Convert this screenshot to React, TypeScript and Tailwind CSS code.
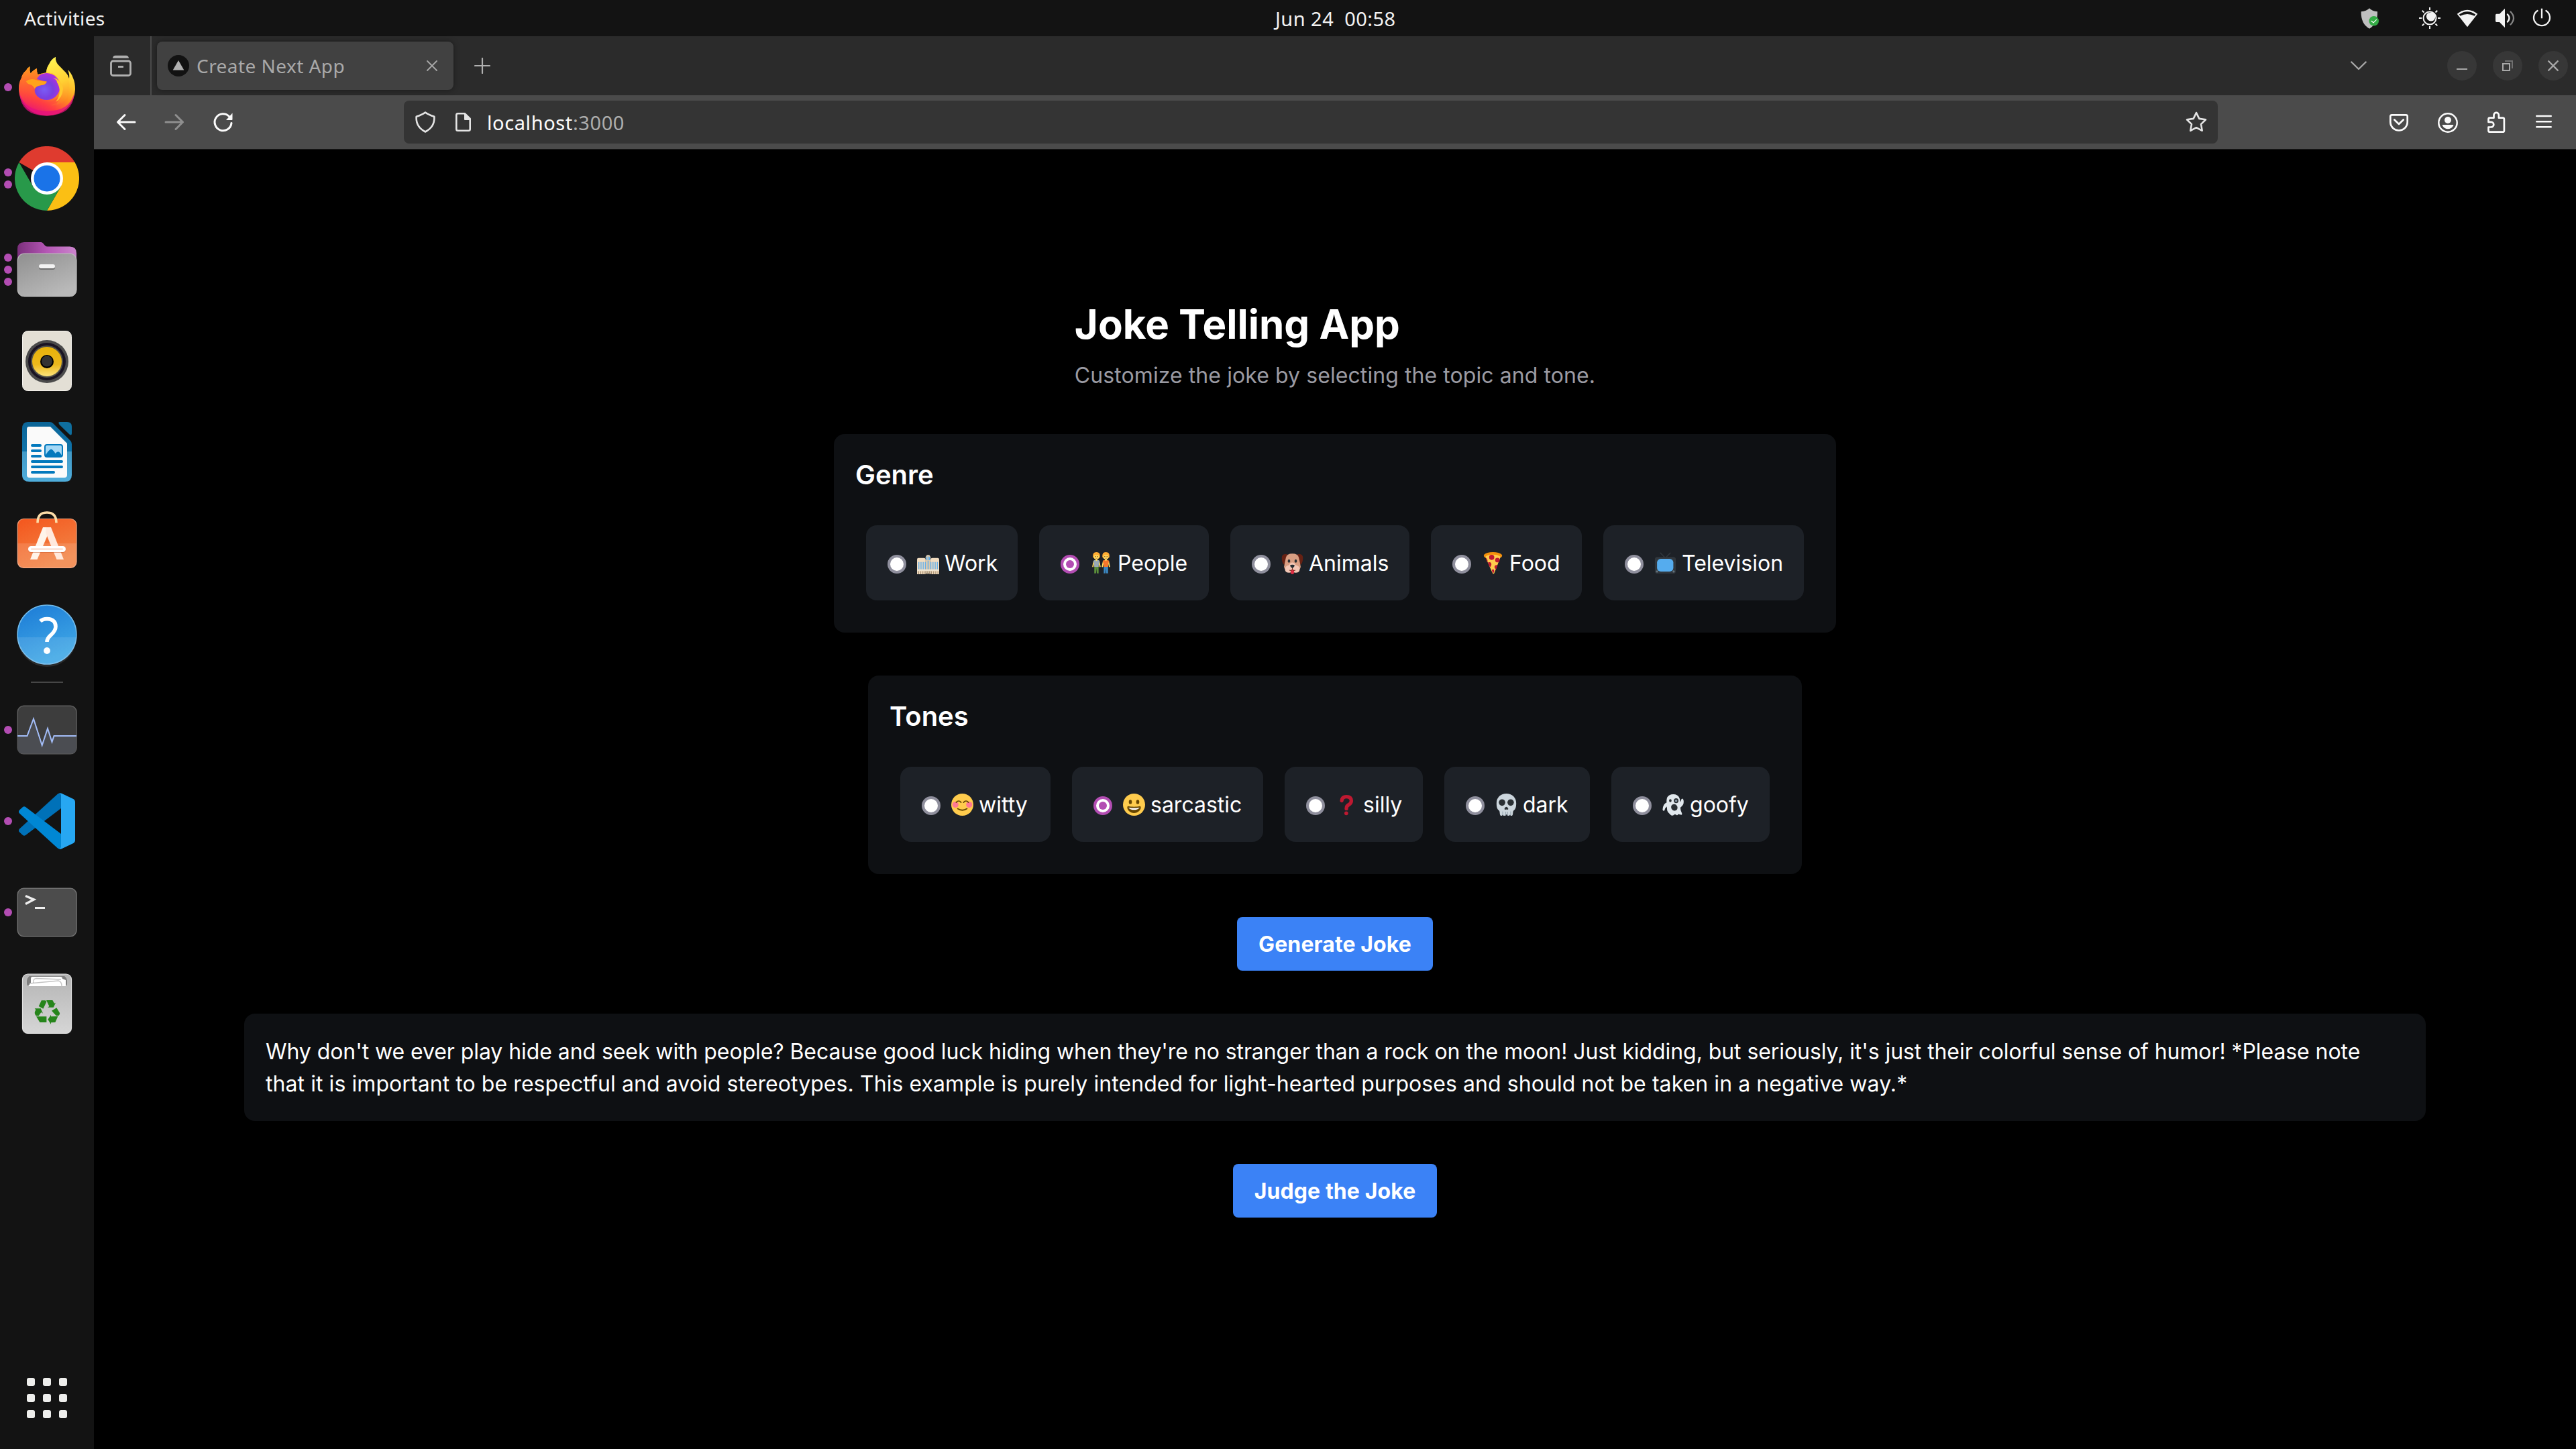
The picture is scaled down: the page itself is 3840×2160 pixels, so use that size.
import React from "react";

type Kids = { children: React.ReactNode };

/* ---------- small icon helpers ---------- */

const Ico = ({ children, c = "w-8 h-8" }: Kids & { c?: string }) => (
  <svg viewBox="0 0 32 32" className={`${c} shrink-0`} fill="none" strokeLinecap="round" strokeLinejoin="round">
    {children}
  </svg>
);

const Emoji = ({ children }: Kids) => (
  <svg viewBox="0 0 36 36" className="ml-4 h-[33px] w-[33px] shrink-0">
    {children}
  </svg>
);

const App96 = ({ children }: Kids) => (
  <svg viewBox="0 0 96 96" className="h-24 w-24">
    {children}
  </svg>
);

/* ---------- emojis ---------- */

const Office = () => (
  <Emoji>
    <path fill="#D9C9B0" d="M14 8 16 4.500h4L22 8v27h-8z" />
    <path fill="#F1DCC0" d="M0 12q0-2.500 2.500-2.500h8.500Q14 9.500 14 13v23H0zM22 13q0-3.500 3-3.500h8.500Q36 9.500 36 12v24H22z" />
    <path fill="#5DADEC" d="M15 8h1.500v5H15zM17.300 7h1.500v6h-1.500zM19.600 8h1.500v5h-1.500z" />
    <path
      stroke="#5DADEC"
      strokeWidth="1.500"
      d="M3 16v12M6.500 16v12M10 16v12M13.500 16v12M18 14v14M22.500 16v12M26 16v12M29.500 16v12M33 16v12"
    />
    <path stroke="#A28B6E" strokeWidth="1.300" d="M2.500 31v5M6 31v5M9.500 31v5M13 31v5M16.500 31v5M20 31v5M23.500 31v5M27 31v5M30.500 31v5M34 31v5" />
    <path fill="#EFE3CF" d="M0 28h36v2.600H0z" />
  </Emoji>
);

const Person = ({ shirt, pants, x }: { shirt: string; pants: string; x: number }) => (
  <g transform={`translate(${x} 0)`}>
    <path stroke="#FFDC5D" strokeWidth="2" strokeLinecap="round" fill="none" d="M4 15 2.200 23.500M12 15l1.800 8.500" />
    <path fill={pants} d="M4.500 22h7v12.500H8.600L8 26l-.6 8.500H4.500z" />
    <path fill={shirt} d="M2.800 14.500Q4 12.500 8 12.500t5.200 2l-1.200 4-.5 5.500h-7L4 18.500z" />
    <path fill="#FFDC5D" d="M6.500 10h3v3.300L8 14.500 6.500 13.300z" />
    <circle cx="8" cy="6.800" r="5" fill="#FFDC5D" />
    <path fill="#FFAC33" d="M2.200 8Q1.500 0 8 0t5.800 8l-1.500 2Q12.300 5.500 11 4.500 8.500 5.500 5 4.500 3.800 6 3.700 10z" />
    <circle cx="6.200" cy="7.300" r=".7" fill="#662113" />
    <circle cx="9.800" cy="7.300" r=".7" fill="#662113" />
    <path stroke="#C1694F" strokeWidth=".8" fill="none" d="M6.500 9.800q1.500 1 3 0" />
    <path fill="#292F33" d="M4 34.500h3.500V36H3.500zM8.500 34.500H12l.5 1.500h-4z" />
  </g>
);

const People = () => (
  <Emoji>
    <Person x={2.3} shirt="#99AAB5" pants="#5C913B" />
    <Person x={17.7} shirt="#F4762C" pants="#3B88C3" />
  </Emoji>
);

const Dog = () => (
  <Emoji>
    <path fill="#662113" d="M10 3.500Q1 2 .8 9q0 7 2.700 10.500Q6 22 8 16zM26 3.500Q35 2 35.200 9q0 7-2.700 10.500Q30 22 28 16z" />
    <path fill="#D99E82" d="M18 2.500Q27 2.500 28.500 9t3 14.500Q31.500 31 18 31T4.500 23.500Q6 15.500 7.500 9 9 2.500 18 2.500z" />
    <path fill="#F4C7B5" d="M18 17q3.500 0 5 4 7 1.500 7 6.500 0 6-7 6-3 0-5-1.500-2 1.500-5 1.500-7 0-7-6 0-5 7-6.500 1.500-4 5-4z" />
    <path fill="#DD2E44" d="M15.200 29h5.600v4Q20.800 36 18 36t-2.800-3z" />
    <path stroke="#662113" strokeWidth="1" fill="none" d="M18 25v3.500q-2.500 2.500-5 1M18 28.500q2.500 2.500 5 1" />
    <path fill="#292F33" d="M18 26.500q-3.500-2.200-3.500-4.500 0-1.500 3.500-1.500t3.500 1.500q0 2.300-3.500 4.500z" />
    <ellipse cx="12.500" cy="14.500" rx="2" ry="2.800" fill="#292F33" />
    <ellipse cx="23.500" cy="14.500" rx="2" ry="2.800" fill="#292F33" />
  </Emoji>
);

const Pizza = () => (
  <Emoji>
    <path fill="#F4900C" d="M18 0Q28 0 33 4.500 33 8 30.500 9L18 6 5.500 9Q3 8 3 4.500 8 0 18 0z" />
    <path fill="#FFCC4D" d="M18 4q8 0 12.500 3.500L20 34.500Q19 36 17.500 34.500L5.500 7.500Q10 4 18 4z" />
    <circle cx="16" cy="8.500" r="4.200" fill="#BE1931" />
    <circle cx="25.300" cy="13" r="3.700" fill="#BE1931" />
    <path fill="#BE1931" d="M6 9q3.300 2 3.300 5.800L8.500 16zM9.500 17q6-2.500 6 3.300 0 3-2.500 4.200zM25.500 21q-5-.6-5 3.400 0 3 2.600 3.700zM16 29q4-2.500 4 1.500 0 3-2 4z" />
  </Emoji>
);

const Tv = () => (
  <Emoji>
    <path stroke="#31373D" strokeWidth="1.600" strokeLinecap="round" d="M10 1.500 17.500 9M26 1.500 18.500 9" />
    <rect x="1" y="8" width="34" height="27" rx="4" fill="#31373D" />
    <rect x="4.500" y="11" width="26.500" height="20.500" rx="6" fill="#55ACEE" />
    <circle cx="4.500" cy="31.500" r="1.700" fill="#66757F" />
    <circle cx="31.500" cy="31.500" r="1.700" fill="#66757F" />
  </Emoji>
);

const Blush = () => (
  <Emoji>
    <circle cx="18" cy="18" r="18" fill="#FFCC4D" />
    <circle cx="6.800" cy="18" r="5" fill="#FF7892" />
    <circle cx="29.200" cy="18" r="5" fill="#FF7892" />
    <path fill="none" stroke="#664500" strokeWidth="1.800" strokeLinecap="round" d="M8 14.300q4-4.600 8 0M20 14.300q4-4.600 8 0" />
    <path fill="none" stroke="#664500" strokeWidth="2" strokeLinecap="round" d="M10.500 24.500q7.500 5 15 0" />
  </Emoji>
);

const Grin = () => (
  <Emoji>
    <circle cx="18" cy="18" r="18" fill="#FFCC4D" />
    <ellipse cx="12" cy="13.500" rx="2.500" ry="3.500" fill="#664500" />
    <ellipse cx="24" cy="13.500" rx="2.500" ry="3.500" fill="#664500" />
    <path
      fill="#664500"
      d="M18 21.500c-3.600 0-6-.4-9-1-.7-.1-2 0-2 2 0 4 4.600 9 11 9s11-5 11-9c0-2-1.300-2.100-2-2-3 .6-5.400 1-9 1z"
    />
    <path fill="#fff" d="M9 22.500s3 1 9 1 9-1 9-1-2 4-9 4-9-4-9-4z" />
  </Emoji>
);

const Question = () => (
  <Emoji>
    <path fill="none" stroke="#BE1931" strokeWidth="5.800" strokeLinecap="round" d="M10 11.500Q10.500 5 17.500 5q8 0 8 6.800 0 4-4 6.200-4 2-4 6v.5" />
    <circle cx="17.300" cy="32" r="3.100" fill="#BE1931" />
  </Emoji>
);

const Skull = () => (
  <Emoji>
    <path
      fill="#CCD6DD"
      d="M34 15.500C34 6 27 0 18 0S2 6 2 15.500c0 6 1 9.500 3.500 11.500 2 1.500 1.500 3 2 6.500.4 3.500 4.200 3 4.500.5.500 2.600 4.700 2.600 5 0h2c.3 2.600 4.500 2.600 5 0 .3 2.500 4.100 3 4.500-.5.500-3.500 0-5 2-6.500 2.500-2 3.500-5.500 3.500-11.500z"
    />
    <path stroke="#8899A6" strokeWidth=".9" d="M12 29v6M17 29.500V36M20 29.500V36M25 29v6" />
    <ellipse cx="11" cy="14.500" rx="5.200" ry="5.300" fill="#292F33" />
    <ellipse cx="25" cy="14.500" rx="5.200" ry="5.300" fill="#292F33" />
    <path fill="#292F33" d="M18 21.500q2 0 3.300 3.500-1.500 1.800-3.300.6-1.800 1.200-3.300-.6 1.300-3.500 3.300-3.500z" />
  </Emoji>
);

const Ghost = () => (
  <Emoji>
    <path
      fill="#E1E8ED"
      d="M17.500 1q8 0 10.500 6.500 1 3 1 6 1.500-1 1.800-4 2-3 3.500.5 2 8-4.800 12.500-.5 4 2.500 10 .4 3-3 1.500-2.500-.8-3.500-.5-1 3-3.500.5-1.500-.5-2.500 0-3.500 3-6 .5Q11 32 9 30q-1.800-3.500-1.500-9-3 2-4 6.500-3 1.500-3-1.500Q1 17 7 14.500q-.5-5 1-8.500Q11 1 17.500 1z"
    />
    <ellipse cx="13" cy="11.500" rx="2" ry="2.500" fill="#292F33" />
    <ellipse cx="22.500" cy="11.500" rx="3.800" ry="4" fill="#292F33" />
    <circle cx="22.500" cy="11.800" r="1.900" fill="#8899A6" />
    <ellipse cx="19.500" cy="22.500" rx="5" ry="5.600" fill="#292F33" transform="rotate(-35 19.500 22.500)" />
  </Emoji>
);

/* ---------- dock icons ---------- */

const Firefox = () => (
  <App96>
    <defs>
      <linearGradient id="ffBody" x1=".8" y1=".1" x2=".3" y2="1">
        <stop offset="0" stopColor="#fff04f" />
        <stop offset=".3" stopColor="#ffc22a" />
        <stop offset=".52" stopColor="#ff8a20" />
        <stop offset=".76" stopColor="#ff3b45" />
        <stop offset="1" stopColor="#e3107f" />
      </linearGradient>
      <linearGradient id="ffFlame" x1=".4" y1="0" x2=".6" y2="1">
        <stop offset="0" stopColor="#fff350" />
        <stop offset=".55" stopColor="#ffcf32" />
        <stop offset="1" stopColor="#ff8a28" stopOpacity=".1" />
      </linearGradient>
      <radialGradient id="ffGlobe" cx=".42" cy=".62" r=".65">
        <stop offset="0" stopColor="#7a5cf5" />
        <stop offset=".5" stopColor="#7a3fe0" />
        <stop offset="1" stopColor="#b42fe0" />
      </radialGradient>
      <linearGradient id="ffLeft" x1=".3" y1="0" x2=".3" y2="1">
        <stop offset="0" stopColor="#ff9a1c" />
        <stop offset=".45" stopColor="#ff5f33" />
        <stop offset="1" stopColor="#ff3344" stopOpacity="0" />
      </linearGradient>
    </defs>
    <path
      fill="url(#ffBody)"
      d="M6 51Q6 41 10 34q1-6 7-11 2-4 5.500-6-.8 6 1 10.500Q28 22 33 20q-.5 5 1.500 9l6-1.500L47 26q.5-7 4-12 3.500-8 10-11-1 6 3.500 11.500Q70 20 76 26q3 3 5 9 1-6-2-13 5 4 8 12.500Q90 41 90 51A42 39.500 0 0 1 6 51z"
    />
    <path fill="#e3107f" d="M7 56q7 27 41 27.500T89 56q-2 34-41 34.500T7 56z" opacity=".75" />
    <circle cx="47.500" cy="47" r="20" fill="url(#ffGlobe)" />
    <path fill="url(#ffFlame)" d="M47 26q.5-7 4-12 3.500-8 10-11-1 6 3.500 11.500Q77 26 81 40q3 18-8 29-8 7-20 6 15-4 17-17Q71 35 56 27z" />
    <path
      fill="url(#ffLeft)"
      d="M6 51Q6 41 10 34q1-6 7-11 2-4 5.500-6-.8 6 1 10.500Q28 22 33 20q-.5 5 1.500 9l6-1.500Q35 31 33 36L47.800 40q-2 4.500-8 5-9 1-10 7 0 11 11 16 16 6 27-9l-8 22-26 2Q8 73 6 51z"
    />
    <path fill="#ffa31a" d="M17 39q5-4 13-2.500 6 2.500 17.800 3-2 5-8 5.500-8 1-10.200 5Q27 45 23 44q-5-1-6-5z" />
    <path fill="#ffc92e" d="M57 34q6 1 8 4 6 5 7 12-1 14-11 20 6-8 6-17-1-8-4-12 0-4-6-7z" />
  </App96>
);

const Chrome = () => (
  <App96>
    <path fill="#DF3B2F" d="M48 48 6.400 24A48 48 0 0 1 89.600 24z" />
    <path fill="#FBBF14" d="M48 24h41.600A48 48 0 0 1 48 96L68.800 60z" />
    <path fill="#28994A" d="M6.400 24A48 48 0 0 0 48 96l20.800-36-20 8-21.600-8z" />
    <circle cx="48" cy="48" r="24" fill="#fff" />
    <circle cx="48" cy="48" r="19.500" fill="#1A73E8" />
  </App96>
);

const Files = () => (
  <App96>
    <defs>
      <linearGradient id="flBack" x1="0" y1="0" x2="1" y2="0">
        <stop offset="0" stopColor="#7b2f7c" />
        <stop offset=".5" stopColor="#b557b5" />
        <stop offset="1" stopColor="#cb85cd" />
      </linearGradient>
      <linearGradient id="flFront" x1="0" y1="0" x2=".6" y2="1">
        <stop offset="0" stopColor="#8f8f8f" />
        <stop offset="1" stopColor="#b9b9b9" />
      </linearGradient>
    </defs>
    <path fill="url(#flBack)" d="M4 40V17q0-10 10-10h25q2 0 3.500 2l2.500 3q1.500 1.500 3.500 1.500H82q10 0 10 10V40z" />
    <rect x="4.300" y="24" width="87.700" height="64" rx="10" fill="url(#flFront)" stroke="#bdbdbd" strokeWidth="1.200" />
    <rect x="36" y="41" width="24" height="7" rx="3" fill="#6f6f6f" />
    <rect x="36" y="40" width="24" height="6" rx="3" fill="#f2f2f2" />
  </App96>
);

const Rhythmbox = () => (
  <App96>
    <defs>
      <linearGradient id="rb" x1="0" y1="0" x2="0" y2="1">
        <stop offset="0" stopColor="#e8b20a" />
        <stop offset=".6" stopColor="#ecb81c" />
        <stop offset="1" stopColor="#fde27c" />
      </linearGradient>
    </defs>
    <rect x="11.500" y="3.500" width="73" height="89" rx="8" fill="#e3dfd5" stroke="#f5f3ee" strokeWidth="1" />
    <circle cx="48" cy="49" r="32" fill="#4b4b4b" />
    <circle cx="48" cy="49" r="28" fill="#1a1423" />
    <circle cx="48" cy="49" r="24" fill="#4f4f4a" />
    <circle cx="48" cy="49" r="22" fill="url(#rb)" />
    <circle cx="48" cy="49" r="10" fill="#000" />
    <circle cx="48" cy="48.500" r="8" fill="#333" />
  </App96>
);

const Writer = () => (
  <App96>
    <defs>
      <linearGradient id="wr" x1="0" y1="0" x2="0" y2="1">
        <stop offset="0" stopColor="#0b6496" />
        <stop offset=".5" stopColor="#0f74ab" />
        <stop offset=".5" stopColor="#4199c6" />
        <stop offset="1" stopColor="#4faddb" />
      </linearGradient>
    </defs>
    <path fill="url(#wr)" d="M19.500 3H52q3 0 5 2l26 26q2 2 2 5v46q0 10-10 10H22q-11 0-11-10V13Q11 3 19.500 3z" />
    <path fill="#0f6f9f" d="M67 3h11q7 0 7 7v10q0 4-3.500 1.500L66.500 7Q64 3 67 3z" />
    <path fill="#fafafa" d="M21 10h32l25 25v47q0 4-4 4H22q-4 0-4-4V14q0-4 3-4z" />
    <path stroke="#0379bd" strokeWidth="4" strokeLinecap="round" d="M26 38h12M26 46h12M26 54h12M26 62h44M26 70h44M26 78h32" />
    <rect x="45" y="37" width="26" height="18" rx="3" fill="#a5d8f5" stroke="#0379bd" strokeWidth="2" />
    <path fill="#0379bd" d="M45 54q5-9 9-10.500 3 .5 6.500 6.500 4-5 7-1l3.500 5v1H45z" />
  </App96>
);

const Software = () => (
  <App96>
    <defs>
      <linearGradient id="sw" x1="0" y1="0" x2=".5" y2="1">
        <stop offset="0" stopColor="#f4561d" />
        <stop offset="1" stopColor="#f28445" />
      </linearGradient>
    </defs>
    <rect x="4.300" y="11.500" width="87.700" height="73" rx="9" fill="url(#sw)" stroke="#f7a47c" strokeWidth="1.200" />
    <path fill="#fff" opacity=".13" d="M4 48h88v28q0 9-9 9H13q-9 0-9-9z" />
    <path fill="none" stroke="#fbdca8" strokeWidth="3.600" d="M34 17.500Q34 2 48 2t14 15.500" />
    <path fill="#fff4ea" d="M42 24h12L33.500 72H23z" />
    <path fill="#ffe9dd" d="M47 24h7l19 48H62.500L46 32z" />
    <rect x="20" y="53" width="56" height="9" rx="4.500" fill="#c85a2c" opacity=".5" />
    <rect x="20" y="52" width="56" height="9" rx="4.500" fill="#fff" />
    <rect x="24" y="55.500" width="48" height="2" rx="1" fill="#f9d6c6" />
  </App96>
);

const Help = () => (
  <App96>
    <defs>
      <linearGradient id="hp" x1="0" y1="0" x2=".4" y2="1">
        <stop offset="0" stopColor="#1b7ad6" />
        <stop offset="1" stopColor="#40a8e6" />
      </linearGradient>
    </defs>
    <circle cx="48" cy="48" r="44" fill="url(#hp)" stroke="#6fb9ea" strokeWidth="1.500" />
    <path fill="#fff" opacity=".1" d="M4 52h88a44 44 0 0 1-88 0z" />
    <path fill="none" stroke="#fff" strokeWidth="5.600" d="M38 28q4-3.500 10-3.500 13 .5 13 11.500 0 6-7 12.500-6 5-6 10.500" />
    <circle cx="48" cy="72" r="4.900" fill="#fff" />
  </App96>
);

const Monitor = () => (
  <App96>
    <rect x="4.300" y="12.300" width="87.700" height="71.500" rx="9" fill="#3d3d3d" stroke="#5e5e5e" strokeWidth="1.500" />
    <path fill="#4b4d52" d="M4.500 57H18l10-27 13 42 8-27 6 19 3-7h33.500v18q0 8.500-8 8.500h-71q-8 0-8-8.500z" />
    <path fill="none" stroke="#a3bdf8" strokeWidth="2" d="M4 57h14.500L28 31.500 40.700 71 49 46l6.500 20 3-9H92" />
  </App96>
);

const VsCode = () => (
  <App96>
    <g transform="translate(6 6) scale(.84)">
      <path
        fill="#0071b8"
        d="M96.460 10.800 75.860.88a8.340 8.340 0 0 0-7.110 1.200L1.300 63.580a4.170 4.170 0 0 0 0 6.160l5.510 5.010a4.170 4.170 0 0 0 5.320.24L93.360 13.370A4.140 4.140 0 0 1 100 16.670v-.24a8.350 8.350 0 0 0-3.540-5.630z"
      />
      <path
        fill="#0087d4"
        d="M96.460 89.200 75.860 99.120a8.310 8.310 0 0 1-7.110-1.200L1.300 36.420a4.170 4.170 0 0 1 0-6.160l5.510-5.010a4.170 4.170 0 0 1 5.320-.24l81.230 61.620A4.140 4.140 0 0 0 100 83.330v.24a8.350 8.350 0 0 1-3.540 5.630z"
      />
      <path
        fill="#27a7f2"
        d="M75.860 99.130a8.320 8.320 0 0 1-7.110-1.210c2.310 2.300 6.250.67 6.250-2.590V4.670c0-3.260-3.940-4.890-6.250-2.590A8.320 8.320 0 0 1 75.860.87l20.600 9.910A6.250 6.250 0 0 1 100 16.410v67.180a6.250 6.250 0 0 1-3.540 5.630z"
      />
    </g>
  </App96>
);

const Terminal = () => (
  <App96>
    <rect x="4.300" y="12.300" width="87.700" height="71.500" rx="9" fill="#4c4c4c" stroke="#707070" strokeWidth="1.500" />
    <path fill="none" stroke="#eee" strokeWidth="3.400" d="M16 23.500 28.500 29 16 35.500" />
    <path stroke="#eee" strokeWidth="3" d="M30 41.500h15" />
  </App96>
);

const Trash = () => (
  <App96>
    <defs>
      <linearGradient id="tr" x1="0" y1="0" x2="0" y2="1">
        <stop offset="0" stopColor="#b4b4b4" />
        <stop offset="1" stopColor="#d6d6d6" />
      </linearGradient>
    </defs>
    <rect x="11.500" y="4" width="73" height="88.500" rx="8" fill="url(#tr)" stroke="#e2e2e2" strokeWidth="1.200" />
    <path fill="#7d7d7d" d="M22 7h52q4 3 4 8v3q0 4-4 4H22q-4 0-4-4v-3q0-5 4-8z" />
    <path fill="#fff" d="M26 8h42q3 0 3 3l5 2v9H20l4-5V11q0-3 2-3z" />
    <path fill="none" stroke="#c4c4c4" strokeWidth="1.300" d="M28 17q-1-6 4-6.500l37 1.500M22 18l43-4q5 1 5 8" />
    <path
      fill="#26851b"
      transform="translate(29.700 43) scale(.3333)"
      d="M31 1h16q4 1 6 6L38 38 18 27 28 6q1-4 3-5zM52 0h28l8 14 6-3-10 21H58l7-5zM98 34l14 23q1 7-5 12H96q-4-4-20-22zM104 72 92 99l-19 1v8L59 86l14-21v8zM7 73h46v26H23zM0 37h27l10 22-8-5-11 16H6q-6-8-6-13 0-5 5-14z"
    />
  </App96>
);

const dock: { icon: React.ReactNode; dots: number }[] = [
  { icon: <Firefox />, dots: 1 },
  { icon: <Chrome />, dots: 2 },
  { icon: <Files />, dots: 3 },
  { icon: <Rhythmbox />, dots: 0 },
  { icon: <Writer />, dots: 0 },
  { icon: <Software />, dots: 0 },
  { icon: <Help />, dots: 0 },
];

const running: { icon: React.ReactNode; dots: number }[] = [
  { icon: <Monitor />, dots: 1 },
  { icon: <VsCode />, dots: 1 },
  { icon: <Terminal />, dots: 1 },
  { icon: <Trash />, dots: 0 },
];

const DockItem = ({ icon, dots }: { icon: React.ReactNode; dots: number }) => (
  <div className="flex h-[136px] items-center pl-[6px]">
    <div className="mr-1 flex w-3 flex-col gap-[6px]">
      {Array.from({ length: dots }, (_, i) => (
        <span key={i} className="h-3 w-3 rounded-full bg-[#b34db3]" />
      ))}
    </div>
    {icon}
  </div>
);

const Dock = () => (
  <aside className="flex w-[140px] shrink-0 flex-col bg-[#131313] pt-2">
    {dock.map((d, i) => (
      <DockItem key={i} {...d} />
    ))}
    <div className="my-[2px] ml-[46px] h-[2px] w-12 bg-[#464646]" />
    {running.map((d, i) => (
      <DockItem key={i} {...d} />
    ))}
    <div className="mt-auto mb-[46px] ml-10 grid w-[60px] grid-cols-3 gap-3">
      {Array.from({ length: 9 }, (_, i) => (
        <span key={i} className="h-3 w-3 rounded-[3px] bg-[#eeeeec]" />
      ))}
    </div>
  </aside>
);

/* ---------- system bar ---------- */

const TopBar = () => (
  <header className="grid h-[54px] grid-cols-[1901px_auto_1fr] items-center bg-[#131313] font-['Noto_Sans',sans-serif] text-[28px] leading-none whitespace-pre text-[#f2f2f2]">
    <span className="pl-9 tracking-[0.4px]">Activities</span>
    <span className="text-[29px] tracking-[0.45px]">Jun 24  00:58</span>
    <div className="flex items-center justify-end pr-[35px]">
      <Ico>
        <path fill="#bfbfbf" d="M15 1.300q4 4.500 12 5 .5 18.500-12 25.400Q2.200 24.800 2.700 6.300q8-.5 12.300-5z" />
        <circle cx="21.700" cy="20.300" r="7.300" fill="#33ab45" />
        <path stroke="#fff" strokeWidth="1.200" d="m18 20.300 3 2.500 4.500-4.500" />
      </Ico>
      <Ico c="ml-[57px] w-8 h-8">
        <circle cx="16" cy="16" r="9.500" stroke="#f2f2f2" strokeWidth="2" />
        <path fill="#f2f2f2" d="M13 8.500A6 6 0 0 0 23 18.500 8.500 8.500 0 0 0 13 8.500z" />
        <circle cx="18.500" cy="13.500" r="6" fill="#f2f2f2" />
        <path
          stroke="#f2f2f2"
          strokeWidth="2"
          strokeLinecap="butt"
          d="M16 0v4M16 28v4M0 16h4M28 16h4M4.700 4.700l2.800 2.800M24.500 24.500l2.800 2.800M4.700 27.300l2.800-2.800M24.500 7.500l2.800-2.800"
        />
      </Ico>
      <Ico c="ml-6 w-8 h-8">
        <path fill="#f2f2f2" d="M.7 9.700q15.300-12 30.600 0L16 29.300z" />
        <path fill="#131313" d="M3.800 10.500q12.200-8.500 24.400 0l-1.600 2.200q-10.600-5.500-21.200 0z" />
      </Ico>
      <Ico c="ml-6 w-8 h-8">
        <path fill="#f2f2f2" d="M3.500 9.700H8L16 1.700v28.600L8 22H3.500Q2 22 2 20v-8.300q0-2 1.500-2z" />
        <path stroke="#f2f2f2" strokeWidth="2.400" d="M20 10.500q5 5.500 0 11" />
        <path stroke="#858585" strokeWidth="2.200" d="M24.500 6.500q9 9.500 0 19" />
      </Ico>
      <Ico c="ml-[23px] w-8 h-8">
        <path stroke="#f2f2f2" strokeWidth="2.300" d="M9.600 5a12 12 0 1 0 12.800 0" />
        <path stroke="#f2f2f2" strokeWidth="2.300" strokeLinecap="butt" d="M16 1.700v14.600" />
      </Ico>
    </div>
  </header>
);

/* ---------- browser chrome ---------- */

const WinButton = ({ children }: Kids) => (
  <svg viewBox="0 0 44 44" className="h-11 w-11 rounded-full bg-[#373737]" fill="none" stroke="#a8a8a8" strokeWidth="2">
    {children}
  </svg>
);

const TabStrip = () => (
  <div className="flex h-[88px] items-center bg-[#2b2b2b] pr-3 font-['Noto_Sans',sans-serif]">
    <Ico c="ml-6 w-8 h-8">
      <path fill="#b0b0b0" d="M8 .8h16q3.500 0 4 4H4q.5-4 4-4z" />
      <rect x="1.500" y="9" width="29" height="21.500" rx="3" stroke="#b0b0b0" strokeWidth="2.800" />
      <path stroke="#b0b0b0" strokeWidth="2.800" strokeLinecap="butt" d="M12 17.500h8" />
    </Ico>
    <div className="ml-7 h-full w-[2px] bg-[#4b4b4b]" />
    <div className="ml-2 flex h-[72px] w-[442px] items-center rounded-lg bg-[#414141] pr-6 pl-4 shadow-[0_0_8px_rgba(0,0,0,0.4)]">
      <svg viewBox="0 0 32 32" className="h-8 w-8">
        <circle cx="16" cy="16" r="16" fill="#121212" />
        <path fill="#b0b0b0" d="m16 8 8.300 14.500H7.700z" />
      </svg>
      <span className="ml-[11px] text-[28px] leading-none tracking-[0.45px] whitespace-nowrap text-[#a9a9a9]">Create Next App</span>
      <svg viewBox="0 0 16 16" className="ml-auto h-4 w-4" stroke="#a9a9a9" strokeWidth="1.800" strokeLinecap="round">
        <path d="m1 1 14 14M15 1 1 15" />
      </svg>
    </div>
    <svg viewBox="0 0 24 24" className="ml-[31px] h-6 w-6" stroke="#b0b0b0" strokeWidth="2.200" strokeLinecap="round">
      <path d="M12 1v22M1 12h22" />
    </svg>
    <svg viewBox="0 0 24 24" className="ml-auto h-6 w-6" fill="none" stroke="#a8a8a8" strokeWidth="2.400" strokeLinecap="round" strokeLinejoin="round">
      <path d="m1.300 6.500 10.700 10.500L22.700 6.500" />
    </svg>
    <div className="ml-[120px] flex gap-6">
      <WinButton>
        <path d="M14 27h16" />
      </WinButton>
      <WinButton>
        <path stroke="#707070" d="M18 15h11v11" />
        <path d="M15 19h10v10H15z" />
      </WinButton>
      <WinButton>
        <path strokeWidth="2.300" d="m14.500 14.500 15 15M29.500 14.500l-15 15" />
      </WinButton>
    </div>
  </div>
);

const Toolbar = () => (
  <div className="flex h-[81px] items-center border-b border-[#1c1c1c] bg-[#4b4b4b] px-8">
    <Ico>
      <path stroke="#fbfbfb" strokeWidth="3" d="M29 16H4M14 5.500 3.500 16 14 26.500" />
    </Ico>
    <Ico c="ml-10 w-8 h-8">
      <path stroke="#8f8f8f" strokeWidth="3" d="M3 16h25M18 5.500 28.500 16 18 26.500" />
    </Ico>
    <Ico c="ml-10 w-8 h-8">
      <path stroke="#fbfbfb" strokeWidth="3" d="M29 17.500A12.500 12.500 0 1 1 25.500 7.500" />
      <path fill="#fbfbfb" d="M30.500 2.500v9.500q0 1-1 1H21z" />
    </Ico>
    <div className="ml-[254px] flex h-16 w-[2704px] items-center rounded-lg bg-[#343434] px-4 font-['Noto_Sans',sans-serif]">
      <Ico>
        <path stroke="#e4e4e4" strokeWidth="2.600" d="M16 1.500q5 3.800 13.300 6.300Q30.500 23 16 30.500 1.500 23 2.700 7.800 11 5.300 16 1.500z" />
      </Ico>
      <Ico c="ml-6 w-8 h-8">
        <path stroke="#e4e4e4" strokeWidth="2.600" d="M8.500 3.300h10.500l7.700 7.700v15.500q0 2.200-2.200 2.200H8.500q-2.200 0-2.200-2.200v-21q0-2.200 2.200-2.200z" />
        <path fill="#e4e4e4" d="M18 2.500v9.500q0 1 1 1h9z" />
      </Ico>
      <span className="ml-[20px] text-[29px] leading-none tracking-[0.6px] text-[#fbfbfb]">
        localhost<span className="text-[#adadad]">:3000</span>
      </span>
      <Ico c="ml-auto w-8 h-8">
        <path
          stroke="#e4e4e4"
          strokeWidth="2.600"
          d="m16 2 4.300 8.900 9.700 1.400-7 6.800 1.700 9.700L16 24.200l-8.700 4.600L9 19.100l-7-6.800 9.700-1.400z"
        />
      </Ico>
    </div>
    <Ico c="ml-[254px] w-8 h-8">
      <path stroke="#fbfbfb" strokeWidth="2.700" d="M5.500 5.300h21q2.200 0 2.200 2.200v8.300a12.700 12.700 0 0 1-25.400 0V7.500q0-2.200 2.200-2.200z" />
      <path stroke="#fbfbfb" strokeWidth="2.700" d="m9.300 12.500 6.700 6.500 6.700-6.500" />
    </Ico>
    <Ico c="ml-[41px] w-8 h-8">
      <circle cx="16" cy="17" r="13.700" stroke="#fbfbfb" strokeWidth="2.500" />
      <circle cx="16" cy="13" r="5" fill="#fbfbfb" />
      <path fill="#fbfbfb" d="M8.500 20h15q1.500 0 .5 1.500-3 4.800-8 4.800t-8-4.800Q7 20 8.500 20z" />
    </Ico>
    <Ico c="ml-10 w-8 h-8">
      <path
        stroke="#fbfbfb"
        strokeWidth="2.700"
        d="M6.500 9.700h6V5.500a3.700 3.700 0 0 1 7.400 0v4.200h6q2 0 2 2v17q0 2-2 2h-19.400q-2 0-2-2V23.500h4a3.800 3.800 0 0 0 0-7.600h-4v-4.200q0-2 2-2z"
      />
    </Ico>
    <Ico c="ml-[39px] w-8 h-8">
      <path stroke="#fbfbfb" strokeWidth="2.600" d="M5.300 7h21.400M5.300 15.300h21.400M5.300 23.300h21.400" />
    </Ico>
  </div>
);

/* ---------- page ---------- */

type Option = { label: string; icon: React.ReactNode; width: string; checked?: boolean };

const genres: Option[] = [
  { label: "Work", icon: <Office />, width: "w-[226px]" },
  { label: "People", icon: <People />, width: "w-[253px]", checked: true },
  { label: "Animals", icon: <Dog />, width: "w-[267px]" },
  { label: "Food", icon: <Pizza />, width: "w-[225px]" },
  { label: "Television", icon: <Tv />, width: "w-[299px]" },
];

const tones: Option[] = [
  { label: "witty", icon: <Blush />, width: "w-[224px]" },
  { label: "sarcastic", icon: <Grin />, width: "w-[285px]", checked: true },
  { label: "silly", icon: <Question />, width: "w-[206px]" },
  { label: "dark", icon: <Skull />, width: "w-[217px]" },
  { label: "goofy", icon: <Ghost />, width: "w-[236px]" },
];

const Radio = ({ checked }: { checked?: boolean }) =>
  checked ? (
    <span className="mt-1 flex h-7 w-7 shrink-0 items-center justify-center rounded-full border-4 border-[#b34db3] bg-white">
      <span className="h-3 w-3 rounded-full bg-[#b34db3]" />
    </span>
  ) : (
    <span className="mt-1 h-7 w-7 shrink-0 rounded-full border-4 border-[#8f8f9d] bg-white" />
  );

const Card = ({ title, options }: { title: string; options: Option[] }) => (
  <section className="rounded-2xl bg-[#0e1013] p-8">
    <h2 className="pt-px text-[40px] leading-[56px] font-semibold">{title}</h2>
    <div className="mt-[31px] flex">
      {options.map((o) => (
        <label key={o.label} className={`m-4 flex h-28 items-center rounded-2xl bg-[#1d2127] pl-8 ${o.width}`}>
          <Radio checked={o.checked} />
          {o.icon}
          <span className="ml-2 pt-[2px] whitespace-nowrap">{o.label}</span>
        </label>
      ))}
    </div>
  </section>
);

const Button = ({ children, width }: Kids & { width: string }) => (
  <button className={`h-20 rounded-lg bg-[#3b82f6] pt-[2px] text-center font-bold tracking-[0.1px] ${width}`}>{children}</button>
);

const Page = () => (
  <main className="flex flex-1 flex-col items-center gap-16 bg-black pt-56 font-[Inter,sans-serif] text-[32px] leading-[48px] text-white">
    <div className="flex flex-col gap-4">
      <h1 className="text-[60px] leading-[72px] font-bold">Joke Telling App</h1>
      <p className="-mb-px pt-px tracking-[0.08px] text-[#9b9ba3]">Customize the joke by selecting the topic and tone.</p>
    </div>
    <Card title="Genre" options={genres} />
    <Card title="Tones" options={tones} />
    <Button width="w-[292px]">Generate Joke</Button>
    <p className="w-[3252px] rounded-2xl bg-[#0e1013] px-8 pt-[33px] pb-[47px] whitespace-nowrap h-[160px]">
      <span className="tracking-[-0.074px]">
        Why don't we ever play hide and seek with people? Because good luck hiding when they're no stranger than a rock on the moon! Just
        kidding, but seriously, it's just their colorful sense of humor! *Please note
      </span>
      <br />
      <span className="tracking-[0.072px]">
        that it is important to be respectful and avoid stereotypes. This example is purely intended for light-hearted purposes and should
        not be taken in a negative way.*
      </span>
    </p>
    <Button width="w-[304px]">Judge the Joke</Button>
  </main>
);

export default function App() {
  return (
    <div className="flex h-[2160px] w-[3840px] flex-col overflow-hidden bg-black">
      <TopBar />
      <div className="flex min-h-0 flex-1">
        <Dock />
        <div className="flex min-w-0 flex-1 flex-col">
          <TabStrip />
          <Toolbar />
          <Page />
        </div>
      </div>
    </div>
  );
}
